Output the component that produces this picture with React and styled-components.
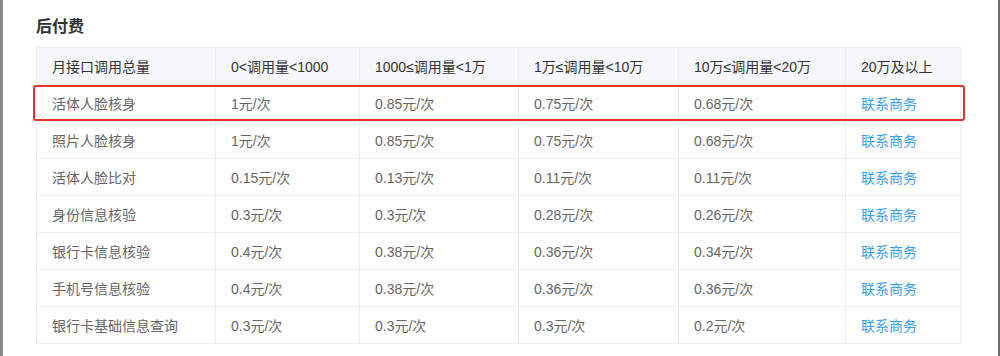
import React from "react";
import styled, { createGlobalStyle } from "styled-components";

const columns = [
  { title: "月接口调用总量", width: 179 },
  { title: "0<调用量<1000", width: 144 },
  { title: "1000≤调用量<1万", width: 159 },
  { title: "1万≤调用量<10万", width: 160 },
  { title: "10万≤调用量<20万", width: 167 },
  { title: "20万及以上", width: 115 },
];

const rows = [
  ["活体人脸核身", "1元/次", "0.85元/次", "0.75元/次", "0.68元/次"],
  ["照片人脸核身", "1元/次", "0.85元/次", "0.75元/次", "0.68元/次"],
  ["活体人脸比对", "0.15元/次", "0.13元/次", "0.11元/次", "0.11元/次"],
  ["身份信息核验", "0.3元/次", "0.3元/次", "0.28元/次", "0.26元/次"],
  ["银行卡信息核验", "0.4元/次", "0.38元/次", "0.36元/次", "0.34元/次"],
  ["手机号信息核验", "0.4元/次", "0.38元/次", "0.36元/次", "0.36元/次"],
  ["银行卡基础信息查询", "0.3元/次", "0.3元/次", "0.3元/次", "0.2元/次"],
];

function App() {
  return (
    <>
      <GlobalStyle />
      <Frame>
        <Title>后付费</Title>
        <TableWrap>
          <Table>
            <colgroup>
              {columns.map((c) => (
                <col key={c.title} style={{ width: c.width }} />
              ))}
            </colgroup>
            <thead>
              <tr>
                {columns.map((c) => (
                  <Th key={c.title}>{c.title}</Th>
                ))}
              </tr>
            </thead>
            <tbody>
              {rows.map((r) => (
                <tr key={r[0]}>
                  {r.map((cell, i) => (
                    <Td key={i}>{cell}</Td>
                  ))}
                  <Td>
                    <Link>联系商务</Link>
                  </Td>
                </tr>
              ))}
            </tbody>
          </Table>
          <Highlight />
        </TableWrap>
      </Frame>
    </>
  );
}

const GlobalStyle = createGlobalStyle`
  html, body {
    margin: 0;
    padding: 0;
    background: #ffffff;
  }
  body {
    font-family: "Liberation Sans", "Noto Sans CJK SC", sans-serif;
  }
`;

const Frame = styled.div`
  box-sizing: border-box;
  width: 1000px;
  height: 356px;
  border-left: 3px solid #8a8a8a;
  border-right: 2px solid #6e6e6e;
  padding: 17px 0 0 33px;
`;

const Title = styled.h3`
  margin: 0 0 10px;
  font-size: 16px;
  line-height: 20px;
  font-weight: 700;
  color: #303133;
`;

const TableWrap = styled.div`
  position: relative;
  width: 924px;
`;

const Table = styled.table`
  width: 924px;
  border-collapse: collapse;
  table-layout: fixed;
  font-size: 14px;
`;

const Th = styled.th`
  height: 37px;
  box-sizing: border-box;
  padding: 0 15px;
  text-align: left;
  font-weight: 400;
  color: #333333;
  background: #f5f7fa;
  border: 1px solid #ebeef5;
  white-space: nowrap;
`;

const Td = styled.td`
  height: 37px;
  box-sizing: border-box;
  padding: 0 15px;
  color: #666666;
  border: 1px solid #ebeef5;
  white-space: nowrap;
`;

const Link = styled.span`
  color: #3a9ef5;
  cursor: pointer;
`;

const Highlight = styled.div`
  position: absolute;
  left: -3px;
  top: 38px;
  width: 928px;
  height: 32px;
  border: 2px solid #e8312b;
  border-radius: 3px;
  pointer-events: none;
`;

export default App;
